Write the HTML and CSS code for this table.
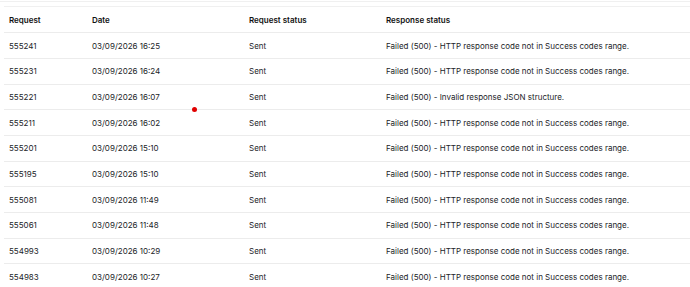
FILE: index.html
```html
<!DOCTYPE html>
<html>
<head>
<meta charset="utf-8">
<link rel="stylesheet" href="styles.css">
</head>
<body>
<div class="topbar"></div>
<div class="wrap">
  <table class="log">
    <colgroup>
      <col class="c1"><col class="c2"><col class="c3"><col class="c4">
    </colgroup>
    <thead>
      <tr><th>Request</th><th>Date</th><th>Request status</th><th>Response status</th></tr>
    </thead>
    <tbody>
      <tr><td>555241</td><td>03/09/2026 16:25</td><td>Sent</td><td>Failed (500) - HTTP response code not in Success codes range.</td></tr>
      <tr><td>555231</td><td>03/09/2026 16:24</td><td>Sent</td><td>Failed (500) - HTTP response code not in Success codes range.</td></tr>
      <tr><td>555221</td><td>03/09/2026 16:07</td><td>Sent</td><td>Failed (500) - Invalid response JSON structure.</td></tr>
      <tr><td>555211</td><td>03/09/2026 16:02</td><td>Sent</td><td>Failed (500) - HTTP response code not in Success codes range.</td></tr>
      <tr><td>555201</td><td>03/09/2026 15:10</td><td>Sent</td><td>Failed (500) - HTTP response code not in Success codes range.</td></tr>
      <tr><td>555195</td><td>03/09/2026 15:10</td><td>Sent</td><td>Failed (500) - HTTP response code not in Success codes range.</td></tr>
      <tr><td>555081</td><td>03/09/2026 11:49</td><td>Sent</td><td>Failed (500) - HTTP response code not in Success codes range.</td></tr>
      <tr><td>555061</td><td>03/09/2026 11:48</td><td>Sent</td><td>Failed (500) - HTTP response code not in Success codes range.</td></tr>
      <tr><td>554993</td><td>03/09/2026 10:29</td><td>Sent</td><td>Failed (500) - HTTP response code not in Success codes range.</td></tr>
      <tr><td>554983</td><td>03/09/2026 10:27</td><td>Sent</td><td>Failed (500) - HTTP response code not in Success codes range.</td></tr>
    </tbody>
  </table>
  <span class="dot"></span>
</div>
</body>
</html>
```
FILE: styles.css
```css
html, body {
  margin: 0;
  padding: 0;
  background: #fff;
}
body {
  font-family: Inter, "Noto Sans", sans-serif;
  font-size: 8px;
  color: #222428;
}
.topbar {
  height: 1px;
  margin-top: 1px;
  background: #f0f0f0;
}
.wrap {
  position: relative;
  margin-top: 4px;
  margin-left: 4px;
  border-top: 1px solid #f0f0f0;
}
.log {
  width: 100%;
  border-collapse: collapse;
  table-layout: fixed;
}
.c1 { width: 83px; }
.c2 { width: 157px; }
.c3 { width: 137px; }
.log th, .log td {
  height: 25.7px;
  padding: 0 0 0 5px;
  text-align: left;
  white-space: nowrap;
  border-bottom: 1px solid #ececec;
  box-sizing: border-box;
}
.log th {
  font-weight: 600;
  color: #111;
}
.log tbody tr:last-child td {
  border-bottom: none;
}
.dot {
  position: absolute;
  left: 188px;
  top: 100px;
  width: 5px;
  height: 5px;
  border-radius: 50%;
  background: #e00000;
}
```
